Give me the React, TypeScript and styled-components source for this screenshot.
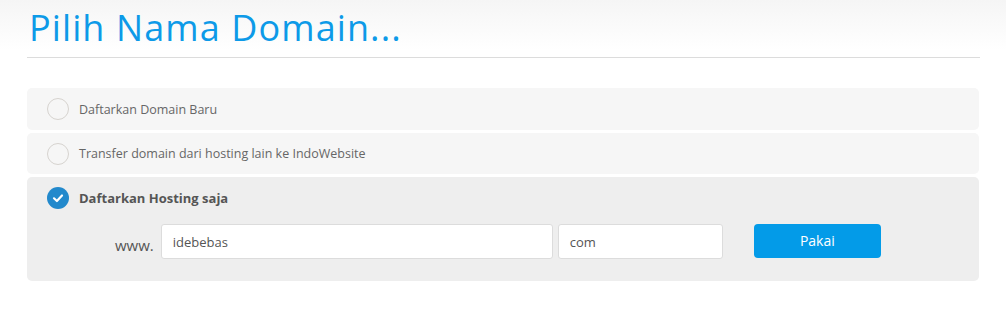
import React from "react";
import styled, { createGlobalStyle } from "styled-components";

const Global = createGlobalStyle`
  html, body { margin: 0; padding: 0; background: #fff; }
  body { font-family: "Open Sans", "Liberation Sans", sans-serif; }
  * { box-sizing: border-box; }
`;

const Page = styled.div`
  width: 1006px;
  height: 313px;
  background: linear-gradient(to bottom, #f5f5f5 0px, #fcfcfc 35px, #ffffff 50px, #ffffff 100%);
  padding: 0 26px 0 27px;
`;

const Title = styled.h1`
  margin: 0;
  padding: 8px 0 9px 2px;
  font-family: "Open Sans", sans-serif;
  font-weight: 400;
  font-size: 36px;
  line-height: 40px;
  color: #0d9ae8;
  border-bottom: 1px solid #dcdcdc;
  letter-spacing: 1.1px;
`;

const List = styled.div`
  margin-top: 30px;
  display: flex;
  flex-direction: column;
  gap: 3px;
  width: 952px;
`;

const Option = styled.div<{ $active?: boolean }>`
  background: ${(p) => (p.$active ? "#eeeeee" : "#f6f6f6")};
  border-radius: 5px;
  padding: ${(p) => (p.$active ? "10px 20px 22px" : "10px 20px 9.5px")};
`;

const OptionHead = styled.div`
  display: flex;
  align-items: center;
  gap: 10px;
  height: 22px;
`;

const Radio = styled.span`
  width: 22px;
  height: 22px;
  border-radius: 50%;
  border: 1px solid #d6d3cf;
  background: #f6f6f6;
  flex: none;
`;

const Check = styled.span`
  width: 22px;
  height: 22px;
  border-radius: 50%;
  background: #2289cc;
  flex: none;
  display: flex;
  align-items: center;
  justify-content: center;
`;

const Label = styled.span<{ $bold?: boolean }>`
  font-size: ${(p) => (p.$bold ? "13px" : "12.5px")};
  color: ${(p) => (p.$bold ? "#555" : "#666")};
  font-weight: ${(p) => (p.$bold ? 700 : 400)};
`;

const DomainRow = styled.div`
  display: flex;
  align-items: center;
  margin-top: 15px;
  padding-left: 68px;
`;

const Www = styled.span`
  font-size: 15px;
  color: #555;
  margin-right: 7px;
  margin-top: 6px;
`;

const Field = styled.div<{ $w: number }>`
  width: ${(p) => p.$w}px;
  height: 35px;
  background: #fff;
  border: 1px solid #dcdcdc;
  border-radius: 3px;
  display: flex;
  align-items: center;
  padding-left: 11px;
  font-size: 13px;
  color: #555;
  margin-right: 5px;
`;

const Button = styled.button`
  margin-left: 26px;
  margin-top: -2px;
  width: 127px;
  height: 34px;
  border: none;
  border-radius: 4px;
  background: #039be8;
  color: #fff;
  font-family: "Open Sans", sans-serif;
  font-size: 14px;
`;

export default function App() {
  return (
    <Page>
      <Global />
      <Title>Pilih Nama Domain...</Title>
      <List>
        <Option>
          <OptionHead>
            <Radio />
            <Label>Daftarkan Domain Baru</Label>
          </OptionHead>
        </Option>
        <Option>
          <OptionHead>
            <Radio />
            <Label>Transfer domain dari hosting lain ke IndoWebsite</Label>
          </OptionHead>
        </Option>
        <Option $active>
          <OptionHead>
            <Check>
              <svg width="14" height="14" viewBox="0 0 14 14">
                <path d="M3 7.3 L5.9 10 L11 4.5" fill="none" stroke="#fff" strokeWidth="2.2" strokeLinecap="round" strokeLinejoin="round" />
              </svg>
            </Check>
            <Label $bold>Daftarkan Hosting saja</Label>
          </OptionHead>
          <DomainRow>
            <Www>www.</Www>
            <Field $w={392}>idebebas</Field>
            <Field $w={165}>com</Field>
            <Button>Pakai</Button>
          </DomainRow>
        </Option>
      </List>
    </Page>
  );
}
